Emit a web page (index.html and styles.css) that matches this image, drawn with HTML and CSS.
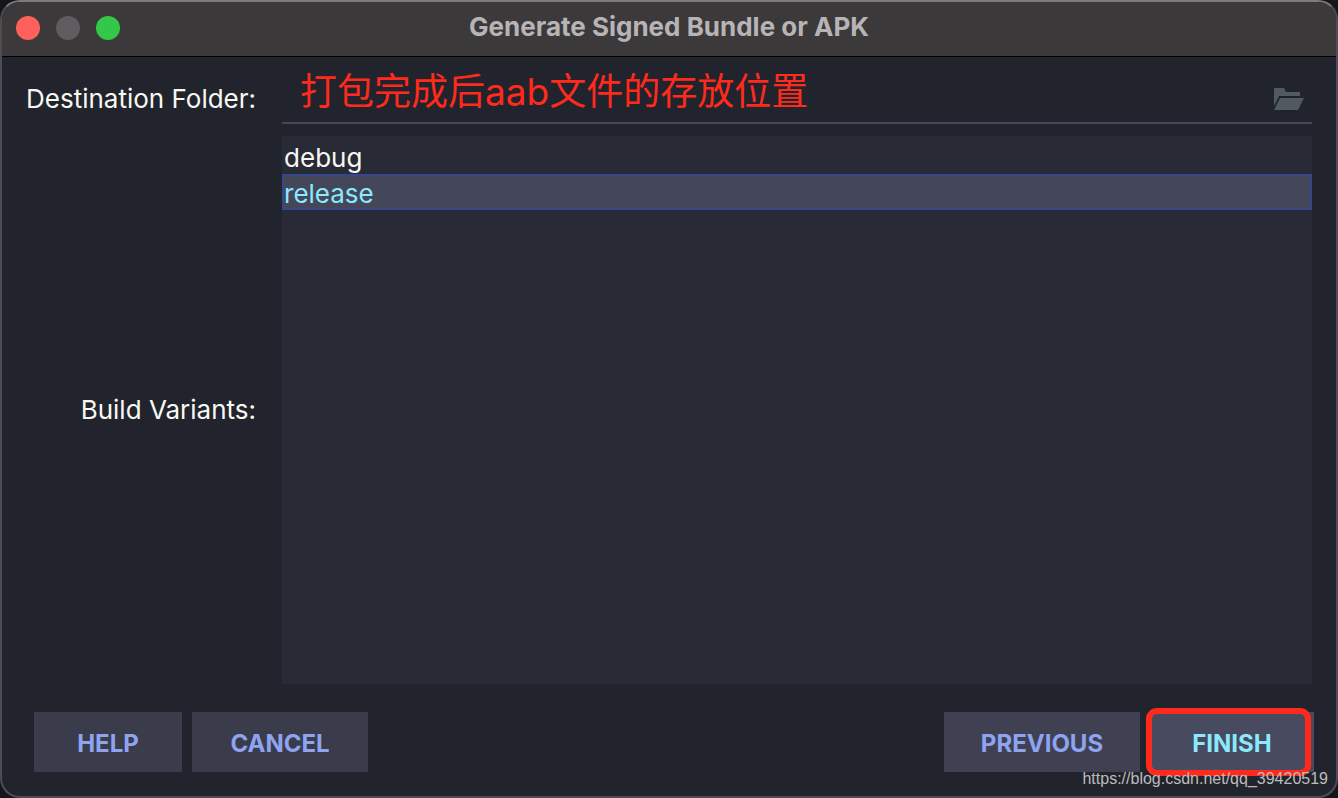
FILE: index.html
```html
<!DOCTYPE html>
<html lang="en">
    <head>
        <title>Generate Signed Bundle or APK</title>
        <meta charset="UTF-8">
        <link rel="stylesheet" href="styles.css">
    </head>
    <body>
        <form class="window">
            <header class="titlebar">
                <div class="lights">
                    <span class="light close"></span>
                    <span class="light minimize"></span>
                    <span class="light maximize"></span>
                </div>
                <h1>Generate Signed Bundle or APK</h1>
            </header>
            <main class="fields">
                <label for="folder" class="folder-label">Destination Folder:</label>
                <div class="path">
                    <input type="text" id="folder" value="打包完成后aab文件的存放位置">
                    <button type="button" class="browse" aria-label="Browse">
                        <svg width="30" height="22" viewBox="0 0 30 22"><path d="M0 0H10L12 4H26V8H5L0 18Z"/><path d="M6 10H30L24 22H0Z"/></svg>
                    </button>
                </div>
                <label for="variants">Build Variants:</label>
                <select id="variants" size="15">
                    <option>debug</option>
                    <option selected>release</option>
                </select>
            </main>
            <footer class="buttons">
                <button type="button" class="help">HELP</button>
                <button type="button" class="cancel">CANCEL</button>
                <button type="button" class="previous">PREVIOUS</button>
                <div class="marked">
                    <button type="button" class="finish">FINISH</button>
                </div>
            </footer>
            <span class="watermark">https://blog.csdn.net/qq_39420519</span>
        </form>
    </body>
</html>
```

FILE: styles.css
```css
* {
    box-sizing: border-box;
}
body {
    margin: 0;
    background: #15161a;
    font-family: Inter, "Noto Sans CJK SC", sans-serif;
    font-size: 26px;
    color: #f8f8f2;
}
.window {
    position: relative;
    display: flex;
    flex-direction: column;
    height: 100vh;
    border: 2px solid #4d4e55;
    border-top-color: #7b7a7c;
    border-radius: 20px;
    background: #22242d;
    overflow: hidden;
}

/* title bar */
.titlebar {
    display: grid;
    grid-template-columns: 1fr auto 1fr;
    align-items: center;
    height: 55px;
    padding: 0 14px 2px;
    border-bottom: 1px solid #000;
    background: #3c393b;
}
.lights {
    display: flex;
    gap: 16px;
}
.light {
    width: 24px;
    height: 24px;
    border-radius: 50%;
}
.close {
    background: #ff605c;
}
.minimize {
    background: #605d60;
}
.maximize {
    background: #34c84a;
}
h1 {
    margin: 0;
    padding-bottom: 2px;
    font-size: 26px;
    line-height: 32px;
    font-weight: 700;
    color: #b6b4b7;
}

/* form fields */
.fields {
    flex: 1;
    display: grid;
    grid-template-columns: auto 1fr;
    grid-template-rows: auto 1fr;
    gap: 12px 26px;
    min-height: 0;
    padding: 7px 24px 0;
}
label {
    align-self: center;
    text-align: right;
    line-height: 32px;
}
.folder-label {
    padding-top: 10px;
}
.path {
    display: flex;
    align-items: center;
    height: 60px;
    border-bottom: 2px solid #44475a;
}
.path input {
    flex: 1;
    min-width: 0;
    height: 58px;
    padding: 0 18px 8px;
    border: 0;
    outline: 0;
    background: none;
    font-family: inherit;
    font-size: 37px;
    color: #ff2a1c;
}
.browse {
    display: flex;
    margin-top: 12px;
    padding: 0 8px;
    border: 0;
    background: none;
}
.browse svg {
    fill: #515961;
}
select {
    width: 100%;
    height: 100%;
    padding: 2px 0 0;
    border: 0;
    border-radius: 0;
    outline: 0;
    appearance: none;
    overflow: hidden;
    background: #282a36;
    font: inherit;
    color: #f8f8f2;
}
option {
    height: 36px;
    padding: 4px 2px 0;
    line-height: 32px;
}
option:checked {
    box-shadow: inset 0 0 0 2px #33478a;
    background: #44475a linear-gradient(#44475a, #44475a);
    color: #8be9fd;
    -webkit-text-fill-color: #8be9fd;
}

/* bottom row */
.buttons {
    display: flex;
    gap: 10px;
    padding: 28px 22px 24px 32px;
}
.buttons button {
    height: 60px;
    padding: 2px 0 0;
    border: 0;
    background: #3a3c4b;
    font: 700 24px Inter, sans-serif;
    color: #8ea4f2;
}
.buttons .help {
    width: 148px;
}
.buttons .cancel {
    width: 176px;
}
.buttons .previous {
    width: 196px;
    margin-left: auto;
    background: #3f4152;
}
.marked {
    position: relative;
}
.buttons .finish {
    width: 164px;
    background: #484a5f;
    color: #8be9fd;
}
.marked::after {
    content: "";
    position: absolute;
    inset: -4px 3px -4px -4px;
    border: 6px solid #ff2a1c;
    border-radius: 11px;
}
.watermark {
    position: absolute;
    right: 8px;
    bottom: 7px;
    font: 16px/20px "Liberation Sans", sans-serif;
    color: #bcbcbe;
}
```
